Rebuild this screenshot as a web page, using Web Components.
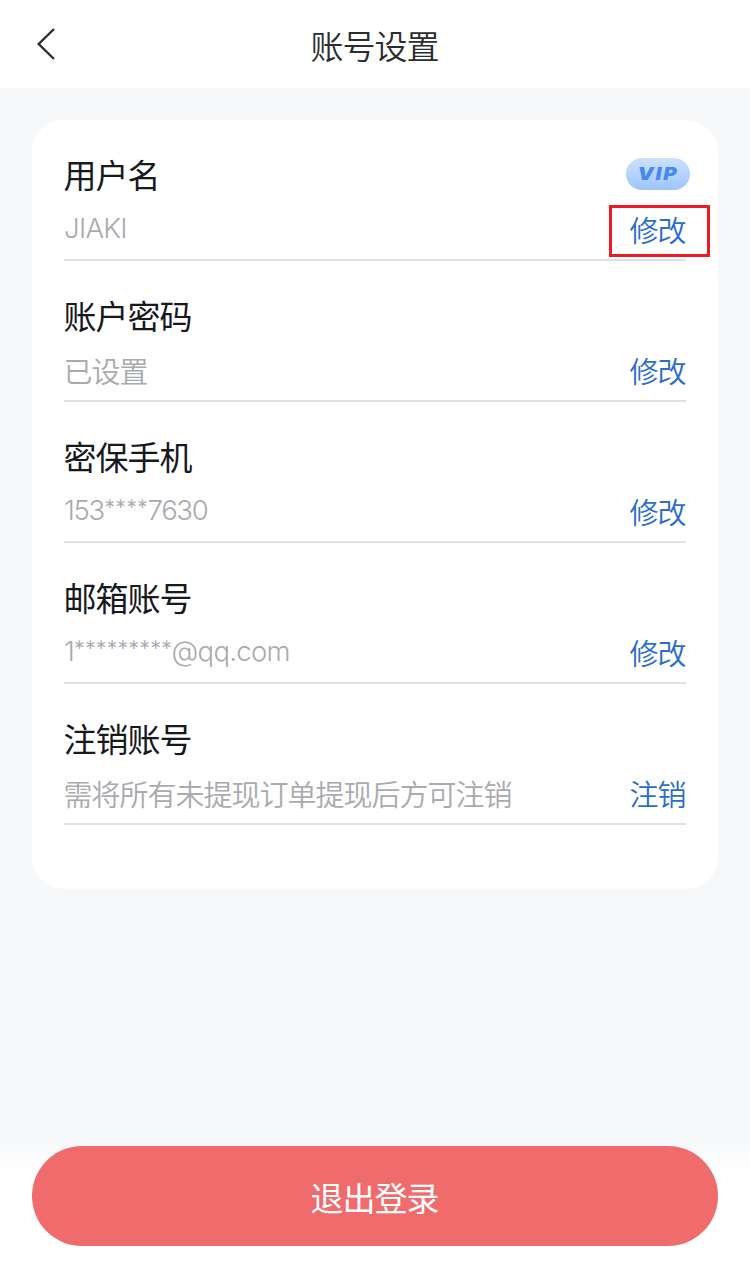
<!DOCTYPE html>
<html lang="zh-CN">
<head>
<meta charset="utf-8">
<title>账号设置</title>
<style>
html,body{margin:0;padding:0;background:#f7f8fa}
body{font-family:"Noto Sans CJK SC","Noto Sans",sans-serif;width:750px;height:1262px;overflow:hidden}
</style>
</head>
<body>
<settings-page></settings-page>
<script>
const define = (name, html) => {
  const t = document.createElement('template');
  t.innerHTML = html;
  customElements.define(name, class extends HTMLElement {
    constructor() {
      super();
      this.attachShadow({mode: 'open'}).append(t.content.cloneNode(true));
    }
  });
};

define('nav-bar', `
<style>
:host{display:grid;grid-template-columns:92px 1fr 92px;align-items:center;height:88px;background:#fff;color:#2c2d30}
svg{display:block;margin-left:32px}
h1{margin:0;padding:1px 1px 0 0;text-align:center;font-size:33px;line-height:46px;font-weight:350;letter-spacing:-1px}
</style>
<svg width="28" height="40" viewBox="0 0 28 40" fill="none" stroke="#2c2f32" stroke-width="2.4"><path d="M22 5 6.700 20 22 35"/></svg>
<h1><slot></slot></h1>`);

define('vip-badge', `
<style>
:host{display:flex;align-items:center;justify-content:center;width:64px;height:32px;border-radius:16px;background:linear-gradient(#cce1ff,#9dc5ff);margin:0 -4px 0 0}
span{font:italic 900 17px/32px Inter,sans-serif;color:#468af0;letter-spacing:1.500px;transform:scaleX(1.2)}
</style><span>VIP</span>`);

define('settings-row', `
<style>
:host{position:relative;display:grid;grid-template-columns:1fr auto;grid-template-rows:44px 63px;align-items:center;box-sizing:border-box;height:141px;padding-top:32px;border-bottom:2px solid #e0e1e6}
.title{font-size:33px;line-height:44px;letter-spacing:-1px;color:#17191c;font-weight:400;margin-left:-.5px}
.value{font-size:29px;line-height:46px;letter-spacing:-1px;color:#a9abaf;font-weight:350;margin-left:-.5px;padding-top:3px}
.badge{display:flex;justify-content:flex-end}
.action{justify-self:end;font-size:29px;line-height:46px;letter-spacing:-1px;color:#2b6dcc;font-weight:350;padding-top:2px;margin-right:.5px}
:host([latin]) .value{font-family:Inter,sans-serif;font-size:27.500px;font-weight:300;letter-spacing:var(--track,-1.300px);padding:1px 0 0;margin:0}
:host([marked])::after{content:"";position:absolute;right:-24px;bottom:2px;width:95px;height:46px;border:3px solid #ec1c24}
</style>
<div class="title"><slot name="title"></slot></div>
<div class="badge"><slot name="badge"></slot></div>
<div class="value"><slot></slot></div>
<div class="action"><slot name="action"></slot></div>`);

define('settings-card', `
<style>:host{display:flex;flex-direction:column;margin:32px 32px 0;padding:0 32px 64px;border-radius:32px;background:#fff}</style><slot></slot>`);

define('logout-bar', `
<style>
:host{display:block;margin-top:auto;padding:16px 32px;background:linear-gradient(#f7f8fa 12px,#fff 40px)}
button{display:block;width:100%;height:100px;border:0;border-radius:50px;background:#ef6b6c;color:#fff;font:400 33px/46px "Noto Sans CJK SC",sans-serif;letter-spacing:-1px;padding:1px 1px 0 0}
</style><button><slot></slot></button>`);

define('settings-page', `
<style>
:host{display:flex;flex-direction:column;height:1262px}
.stars{font-family:Lato,sans-serif;font-weight:400;font-size:27.500px;letter-spacing:-.8px}
.domain{letter-spacing:-.7px}
</style>
<nav-bar>账号设置</nav-bar>
<settings-card>
<settings-row latin marked style="--track:-.7px"><span slot="title">用户名</span><vip-badge slot="badge"></vip-badge>JIAKI<span slot="action">修改</span></settings-row>
<settings-row><span slot="title">账户密码</span>已设置<span slot="action">修改</span></settings-row>
<settings-row latin><span slot="title">密保手机</span>153<span class="stars">****</span>7630<span slot="action">修改</span></settings-row>
<settings-row latin><span slot="title">邮箱账号</span>1<span class="stars">*********</span><span class="domain">@qq.com</span><span slot="action">修改</span></settings-row>
<settings-row><span slot="title">注销账号</span>需将所有未提现订单提现后方可注销<span slot="action">注销</span></settings-row>
</settings-card>
<logout-bar>退出登录</logout-bar>`);
</script>
</body>
</html>
